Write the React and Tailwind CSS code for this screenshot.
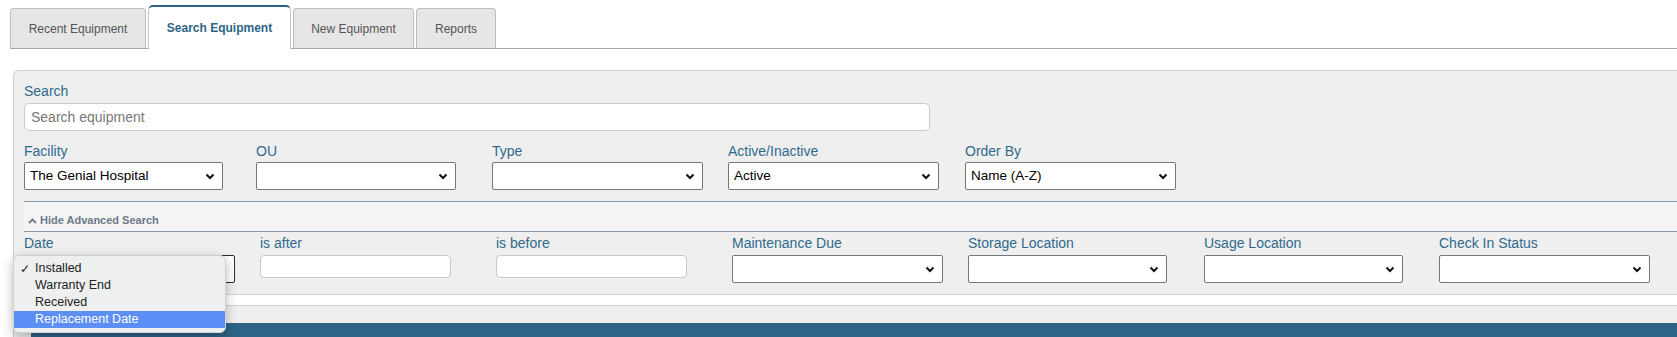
import React from "react";

const tabs = [
  { label: "Recent Equipment", w: "w-[136px]" },
  { label: "Search Equipment", w: "w-[143px]", active: true },
  { label: "New Equipment", w: "w-[121px]" },
  { label: "Reports", w: "w-[80px]" },
];

function Chevron() {
  return (
    <svg width="10" height="7" viewBox="0 0 10 7" className="shrink-0">
      <path d="M1.5 1.5l3.5 3.5 3.5-3.5" fill="none" stroke="#111" strokeWidth="2" />
    </svg>
  );
}

function Select({ w, value, dark }) {
  return (
    <div
      className={`${w} h-[28px] bg-white border ${dark ? "border-[#2b2b2b]" : "border-[#767676]"} rounded-[2px] flex items-center pl-[5px] pr-[7px] text-[13.5px] text-black`}
    >
      <span className="flex-1 truncate">{value}</span>
      <Chevron />
    </div>
  );
}

function Field({ label, col, children }) {
  return (
    <div className={`${col} shrink-0 flex flex-col`}>
      <div className="text-[14px] leading-[17px] text-[#2f6a8d]">{label}</div>
      <div className="mt-[2px]">{children}</div>
    </div>
  );
}

function DateMenu() {
  const items = ["Installed", "Warranty End", "Received", "Replacement Date"];
  return (
    <div className="absolute left-[-11px] top-0 w-[213px] py-[4px] rounded-[6px] bg-[#eef0f0] border border-[#d0d0d0] shadow-[0_4px_12px_rgba(0,0,0,0.28)] z-10 text-[12.5px] text-[#222]">
      {items.map((it, i) => (
        <div
          key={it}
          className={`h-[17px] flex items-center ${i === 3 ? "bg-[#5b8ff5] text-white" : ""}`}
        >
          <span className="w-[21px] pl-[6px] text-[12px]">{i === 0 ? "✓" : ""}</span>
          <span>{it}</span>
        </div>
      ))}
    </div>
  );
}

export default function App() {
  return (
    <div className="w-full h-[337px] overflow-hidden bg-white font-['Liberation_Sans',Arial,sans-serif]">
      {/* Tabs */}
      <div className="ml-[10px] pt-[5px] flex items-end gap-[2px] border-b border-[#a9a9a9] h-[49px]">
        {tabs.map((t) =>
          t.active ? (
            <div
              key={t.label}
              className={`${t.w} h-[44px] -mb-px bg-white border-t-[2px] border-t-[#2c6485] border-x border-x-[#c4c4c4] rounded-t-[5px] flex items-center justify-center text-[12px] font-bold text-[#2c6485]`}
            >
              {t.label}
            </div>
          ) : (
            <div
              key={t.label}
              className={`${t.w} h-[40px] bg-[#e6e6e6] border-t border-x border-[#bdbdbd] rounded-t-[4px] flex items-center justify-center text-[12px] text-[#555]`}
            >
              {t.label}
            </div>
          )
        )}
      </div>

      {/* Search panel */}
      <div className="mt-[21px] ml-[13px] border-t border-l border-[#cfcfcf] rounded-tl-[6px] bg-[#efefef] h-[300px]">
        <div className="pl-[10px] pt-[12px]">
          <div className="text-[14px] leading-[17px] text-[#2f6a8d]">Search</div>
          <div className="mt-[3px] w-[906px] h-[28px] bg-white border border-[#cbcbcb] rounded-[5px] flex items-center px-[6px] text-[14px] text-[#777]">
            Search equipment
          </div>

          <div className="mt-[12px] flex">
            <Field label="Facility" col="w-[232px]">
              <Select w="w-[199px]" value="The Genial Hospital" />
            </Field>
            <Field label="OU" col="w-[236px]">
              <Select w="w-[200px]" value="" />
            </Field>
            <Field label="Type" col="w-[236px]">
              <Select w="w-[211px]" value="" />
            </Field>
            <Field label="Active/Inactive" col="w-[237px]">
              <Select w="w-[211px]" value="Active" />
            </Field>
            <Field label="Order By" col="w-[236px]">
              <Select w="w-[211px]" value="Name (A-Z)" />
            </Field>
          </div>

          <div className="mt-[11px] border-t border-b border-[#8598a9] bg-[#f4f4f4] h-[31px] pt-[12px] pl-[4px] flex items-start">
            <div className="flex items-center gap-[3px] text-[11px] leading-[13px] font-bold text-[#6c7a89]">
              <svg width="9" height="6" viewBox="0 0 9 6">
                <path d="M1 5l3.5-3.5L8 5" fill="none" stroke="#6c7a89" strokeWidth="1.8" />
              </svg>
              Hide Advanced Search
            </div>
          </div>

          <div className="pt-[3px] flex">
            <div className="w-[236px] shrink-0 flex flex-col">
              <div className="text-[14px] leading-[17px] text-[#2f6a8d]">Date</div>
              <div className="mt-[3px] relative">
                <Select w="w-[211px]" value="" dark />
                <DateMenu />
              </div>
            </div>
            <div className="w-[236px] shrink-0 flex flex-col">
              <div className="text-[14px] leading-[17px] text-[#2f6a8d]">is after</div>
              <div className="mt-[3px] w-[191px] h-[23px] bg-white border border-[#c8c8c8] rounded-[4px]" />
            </div>
            <div className="w-[236px] shrink-0 flex flex-col">
              <div className="text-[14px] leading-[17px] text-[#2f6a8d]">is before</div>
              <div className="mt-[3px] w-[191px] h-[23px] bg-white border border-[#c8c8c8] rounded-[4px]" />
            </div>
            <div className="w-[236px] shrink-0 flex flex-col">
              <div className="text-[14px] leading-[17px] text-[#2f6a8d]">Maintenance Due</div>
              <div className="mt-[3px]"><Select w="w-[211px]" value="" /></div>
            </div>
            <div className="w-[236px] shrink-0 flex flex-col">
              <div className="text-[14px] leading-[17px] text-[#2f6a8d]">Storage Location</div>
              <div className="mt-[3px]"><Select w="w-[199px]" value="" /></div>
            </div>
            <div className="w-[235px] shrink-0 flex flex-col">
              <div className="text-[14px] leading-[17px] text-[#2f6a8d]">Usage Location</div>
              <div className="mt-[3px]"><Select w="w-[199px]" value="" /></div>
            </div>
            <div className="w-[236px] shrink-0 flex flex-col">
              <div className="text-[14px] leading-[17px] text-[#2f6a8d]">Check In Status</div>
              <div className="mt-[3px]"><Select w="w-[211px]" value="" /></div>
            </div>
          </div>
        </div>

        <div className="mt-[11px] h-[12px] bg-white border-t border-b border-[#d4d4d4]" />
        <div className="mt-[17px] ml-[17px] h-[40px] bg-[#2c6485]" />
      </div>
    </div>
  );
}
